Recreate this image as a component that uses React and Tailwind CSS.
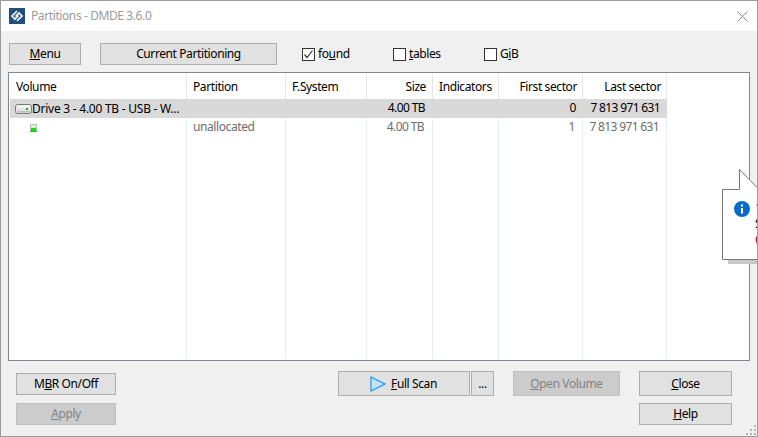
const columns = [
  { title: "Volume", width: "w-[177px]", align: "text-left pl-[6px]", cell: "text-left pl-[6px]" },
  { title: "Partition", width: "w-[99px]", align: "text-left pl-[6px]", cell: "text-left pl-[6px]", second: "unallocated" },
  { title: "F.System", width: "w-[81px]", align: "text-left pl-[6px]", cell: "text-left pl-[6px]" },
  { title: "Size", width: "w-[66px]", align: "text-right pr-[6px]", cell: "text-right pr-[8px] tracking-[-0.6px]", first: "4.00 TB", second: "4.00 TB" },
  { title: "Indicators", width: "w-[66px]", align: "text-left pl-[6px]", cell: "text-left pl-[6px]" },
  { title: "First sector", width: "w-[84px]", align: "text-right pr-[5px]", cell: "text-right pr-[7px]", first: "0", second: "1" },
  { title: "Last sector", width: "w-[84px]", align: "text-right pr-[5px]", cell: "text-right pr-[7px] tracking-[-0.65px]", first: "7 813 971 631", second: "7 813 971 631" },
];

function Btn({ children, className = "", disabled }) {
  return (
    <button
      className={`flex items-center justify-center border leading-none ${
        disabled ? "border-[#bfbfbf] bg-[#cccccc] text-[#838383]" : "border-[#adadad] bg-[#e1e1e1] text-black"
      } ${className}`}
    >
      {children}
    </button>
  );
}

function Check({ checked, label }) {
  return (
    <div className="flex h-[22px] w-[91px] items-center">
      <span className="flex h-[13px] w-[13px] items-center justify-center border border-[#333333] bg-white">
        {checked && (
          <svg width="11" height="11" viewBox="0 0 11 11">
            <path d="M1.5 5.5 L4 8.5 L9.5 1.5" fill="none" stroke="#333" strokeWidth="1.2" />
          </svg>
        )}
      </span>
      <span className="ml-[3px]">{label}</span>
    </div>
  );
}

function Logo() {
  return (
    <svg width="16" height="16" viewBox="0 0 16 16" className="shrink-0">
      <rect width="16" height="16" fill="#1f5080" />
      <path d="M8 3 L3 8 L6 11 L9.5 7.5" fill="none" stroke="#fff" strokeWidth="1.6" />
      <path d="M8 13 L13 8 L10 5 L6.5 8.5" fill="none" stroke="#fff" strokeWidth="1.6" />
    </svg>
  );
}

function DriveIcon() {
  return (
    <svg width="17" height="10" viewBox="0 0 17 10" className="shrink-0">
      <rect x="0.5" y="0.5" width="16" height="9" rx="2" fill="#e4e4e4" stroke="#7a7a7a" />
      <rect x="2" y="1.5" width="13" height="2" fill="#f8f8f8" />
      <rect x="2" y="7" width="13" height="1.5" fill="#bdbdbd" />
      <rect x="11" y="4" width="2" height="2" fill="#0cb50c" />
    </svg>
  );
}

function VolumeIcon() {
  return (
    <svg width="7" height="8" viewBox="0 0 7 8" className="ml-[14px]">
      <rect width="7" height="8" fill="#bdbdbd" />
      <rect x="1" y="1" width="5" height="3" fill="#c8fcc8" />
      <rect x="1" y="4" width="5" height="3" fill="#10e010" />
      <rect y="7" width="7" height="1" fill="#10c810" />
    </svg>
  );
}

export default function App() {
  return (
    <div
      className="relative flex h-[437px] w-[758px] flex-col overflow-hidden border border-[#9c9c9c] bg-[#f0f0f0] text-[12px] tracking-[-0.4px] text-black"
      style={{ fontFamily: '"Noto Sans", sans-serif' }}
    >
      <div className="flex h-[30px] items-center bg-white pl-[8px] pr-[9px]">
        <Logo />
        <span className="ml-[6px] text-[#9a9a9a]">Partitions - DMDE 3.6.0</span>
        <svg width="11" height="11" viewBox="0 0 11 11" className="ml-auto">
          <path d="M0.5 0.5 L10.5 10.5 M10.5 0.5 L0.5 10.5" stroke="#8a8a8a" />
        </svg>
      </div>

      <div className="flex h-[41px] items-start pl-[8px] pt-[12px]">
        <Btn className="h-[22px] w-[72px]">
          <span><u>M</u>enu</span>
        </Btn>
        <Btn className="ml-[19px] mr-[25px] h-[22px] w-[177px]">Current Partitioning</Btn>
        <Check checked label={<>fo<u>u</u>nd</>} />
        <Check label={<><u>t</u>ables</>} />
        <Check label={<>G<u>i</u>B</>} />
      </div>

      <div className="ml-[7px] flex h-[289px] w-[742px] border border-[#828790] bg-white pl-px pt-px">
        {columns.map((col, i) => (
          <div key={col.title} className={`flex h-full flex-col ${col.width}`}>
            <div className={`h-[25px] shrink-0 border-r border-[#e5e5e5] pt-[4px] leading-[17px] ${col.align}`}>
              {col.title}
            </div>
            <div className={`h-[19px] shrink-0 bg-[#d9d9d9] leading-[18px] ${col.cell}`}>
              {i === 0 ? (
                <div className="flex h-full items-center">
                  <span className="-ml-px"><DriveIcon /></span>
                  <span className="whitespace-nowrap tracking-[-0.25px]">Drive 3 - 4.00 TB - USB - W...</span>
                </div>
              ) : (
                col.first
              )}
            </div>
            <div className="flex-1 border-r border-[#e3effb]">
              <div className={`h-[19px] leading-[18px] text-[#6d6d6d] ${col.cell}`}>
                {i === 0 ? (
                  <div className="flex h-full items-center">
                    <VolumeIcon />
                  </div>
                ) : (
                  col.second
                )}
              </div>
            </div>
          </div>
        ))}
      </div>

      <div className="relative flex flex-1 pl-[15px]">
        <div className="flex flex-col gap-[8px] pt-[12px]">
          <Btn className="h-[22px] w-[100px]">
            <span>M<u>B</u>R On/Off</span>
          </Btn>
          <Btn disabled className="h-[22px] w-[100px]">
            <span><u>A</u>pply</span>
          </Btn>
        </div>
        <div className="ml-[222px] flex items-start gap-[1px] pt-[10px]">
          <Btn className="h-[25px] w-[132px]">
            <svg width="16" height="16" viewBox="0 0 16 16" className="mr-[5px] -ml-[1px]">
              <path d="M1 1 L15 8 L1 15 Z" fill="#bfe3fb" stroke="#1e9ae6" strokeWidth="1.2" />
            </svg>
            <span><u>F</u>ull Scan</span>
          </Btn>
          <Btn className="h-[25px] w-[23px]">...</Btn>
        </div>
        <div className="ml-[19px] pt-[10px]">
          <Btn disabled className="h-[25px] w-[107px]">
            <span><u>O</u>pen Volume</span>
          </Btn>
        </div>
        <div className="ml-[19px] flex flex-col gap-[7px] pt-[10px]">
          <Btn className="h-[25px] w-[93px]">
            <span><u>C</u>lose</span>
          </Btn>
          <Btn className="h-[22px] w-[93px]">
            <span><u>H</u>elp</span>
          </Btn>
        </div>
        <svg width="10" height="10" viewBox="0 0 10 10" className="absolute bottom-[1px] right-[1px]" fill="#b4b4b4">
          <rect x="8" y="0" width="2" height="2" />
          <rect x="4" y="4" width="2" height="2" />
          <rect x="8" y="4" width="2" height="2" />
          <rect x="0" y="8" width="2" height="2" />
          <rect x="4" y="8" width="2" height="2" />
          <rect x="8" y="8" width="2" height="2" />
        </svg>
      </div>

      {/* balloon hint cut off by the window edge */}
      <div className="absolute left-[721px] top-[168px] h-[100px] w-[37px] overflow-hidden">
        <svg width="37" height="100" viewBox="0 0 37 100" className="absolute left-0 top-0">
          <rect x="6" y="91" width="31" height="4" fill="#c8c8c8" />
          <path d="M0.5 20.5 H17.5 V0.5 L37 20.5 V90.5 H0.5 Z" fill="#fff" stroke="#777" />
        </svg>
        <svg width="16" height="16" viewBox="0 0 16 16" className="absolute left-[12px] top-[32px]">
          <circle cx="8" cy="8" r="8" fill="#0a6cc4" />
          <rect x="7" y="7" width="2" height="5.5" fill="#fff" />
          <rect x="7" y="3.5" width="2" height="2" fill="#fff" />
        </svg>
        <div className="absolute left-[33px] top-[31px] whitespace-nowrap leading-[16px]">
          <div className="text-[#333]">1</div>
          <div>S</div>
          <div className="text-[#b00000]">C</div>
        </div>
      </div>
    </div>
  );
}
